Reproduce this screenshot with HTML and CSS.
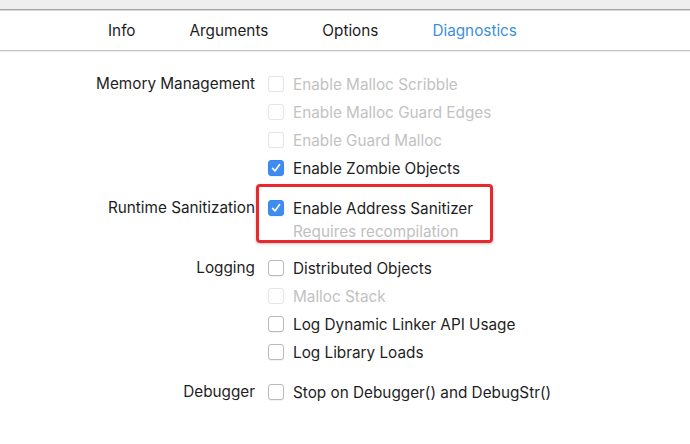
FILE: index.html
```html
<!DOCTYPE html>
<html lang="en">
<head>
    <meta charset="UTF-8">
    <title>Scheme - Diagnostics</title>
    <link rel="stylesheet" href="styles.css">
</head>
<body>
    <div class="toolbar"></div>

    <div class="tabs">
        <span class="tab">Info</span>
        <span class="tab">Arguments</span>
        <span class="tab">Options</span>
        <span class="tab active">Diagnostics</span>
    </div>

    <div class="settings">
        <!-- Memory Management -->
        <div class="label">Memory Management</div>
        <div class="options">
            <div class="option disabled"><span class="box"></span>Enable Malloc Scribble</div>
            <div class="option disabled"><span class="box"></span>Enable Malloc Guard Edges</div>
            <div class="option disabled"><span class="box"></span>Enable Guard Malloc</div>
            <div class="option"><span class="box checked"></span>Enable Zombie Objects</div>
        </div>

        <!-- Runtime Sanitization -->
        <div class="label">Runtime Sanitization</div>
        <div class="options highlight">
            <div class="option"><span class="box checked"></span>Enable Address Sanitizer</div>
            <div class="note">Requires recompilation</div>
        </div>

        <!-- Logging -->
        <div class="label">Logging</div>
        <div class="options">
            <div class="option"><span class="box"></span>Distributed Objects</div>
            <div class="option disabled"><span class="box"></span>Malloc Stack</div>
            <div class="option"><span class="box"></span>Log Dynamic Linker API Usage</div>
            <div class="option"><span class="box"></span>Log Library Loads</div>
        </div>

        <!-- Debugger -->
        <div class="label">Debugger</div>
        <div class="options">
            <div class="option"><span class="box"></span>Stop on Debugger() and DebugStr()</div>
        </div>
    </div>
</body>
</html>
```

FILE: styles.css
```css
body {
    margin: 0;
    font-family: 'Inter', 'Liberation Sans', sans-serif;
    font-size: 15.3px;
    color: #1e1e1e;
    background: #fff;
}

.toolbar {
    height: 9px;
    background: #efefef;
    border-bottom: 1px solid #a6a6a6;
    box-shadow: 0 1px 0 #d8d8d8;
}

.tabs {
    height: 40px;
    display: flex;
    align-items: center;
    padding-left: 108px;
    gap: 54px;
    border-bottom: 1px solid #c6c6c6;
    box-shadow: 0 1px 0 #ececec;
}

.tab {
    color: #1d1d1d;
}

.tab.active {
    color: #3d8fdc;
}

.settings {
    display: grid;
    grid-template-columns: 255px auto;
    column-gap: 13px;
    padding-top: 19px;
}

.label {
    text-align: right;
    height: 28px;
    line-height: 28px;
}

.options {
    margin-bottom: 12px;
}

.option {
    display: flex;
    align-items: center;
    height: 28px;
}

.option.disabled {
    color: #c2c2c2;
}

.box {
    width: 14px;
    height: 14px;
    border: 1px solid #b9b9b9;
    border-radius: 3px;
    background: #fff;
    margin-right: 9px;
    box-shadow: 0 1px 1px rgba(0,0,0,0.06);
    flex-shrink: 0;
}

.disabled .box {
    border-color: #e4e4e4;
    box-shadow: none;
}

.box.checked {
    border-color: #3a86ee;
    background: #3d8cf2 no-repeat center/12px 12px url("data:image/svg+xml;utf8,<svg xmlns='http://www.w3.org/2000/svg' viewBox='0 0 12 12'><path d='M2.6 6.4 L5 8.9 L9.6 2.6' fill='none' stroke='white' stroke-width='1.7' stroke-linecap='round' stroke-linejoin='round'/></svg>");
}

.highlight {
    position: relative;
    margin-bottom: 12px;
}

/* red annotation box */
.highlight::before {
    content: "";
    position: absolute;
    left: -12px;
    top: -10px;
    width: 231px;
    height: 53px;
    border: 3px solid #e8282c;
    border-radius: 4px;
    box-shadow: 0 1px 3px rgba(0,0,0,0.25);
}

.note {
    color: #c0c0c0;
    padding-left: 25px;
    height: 20px;
    line-height: 20px;
}
```
